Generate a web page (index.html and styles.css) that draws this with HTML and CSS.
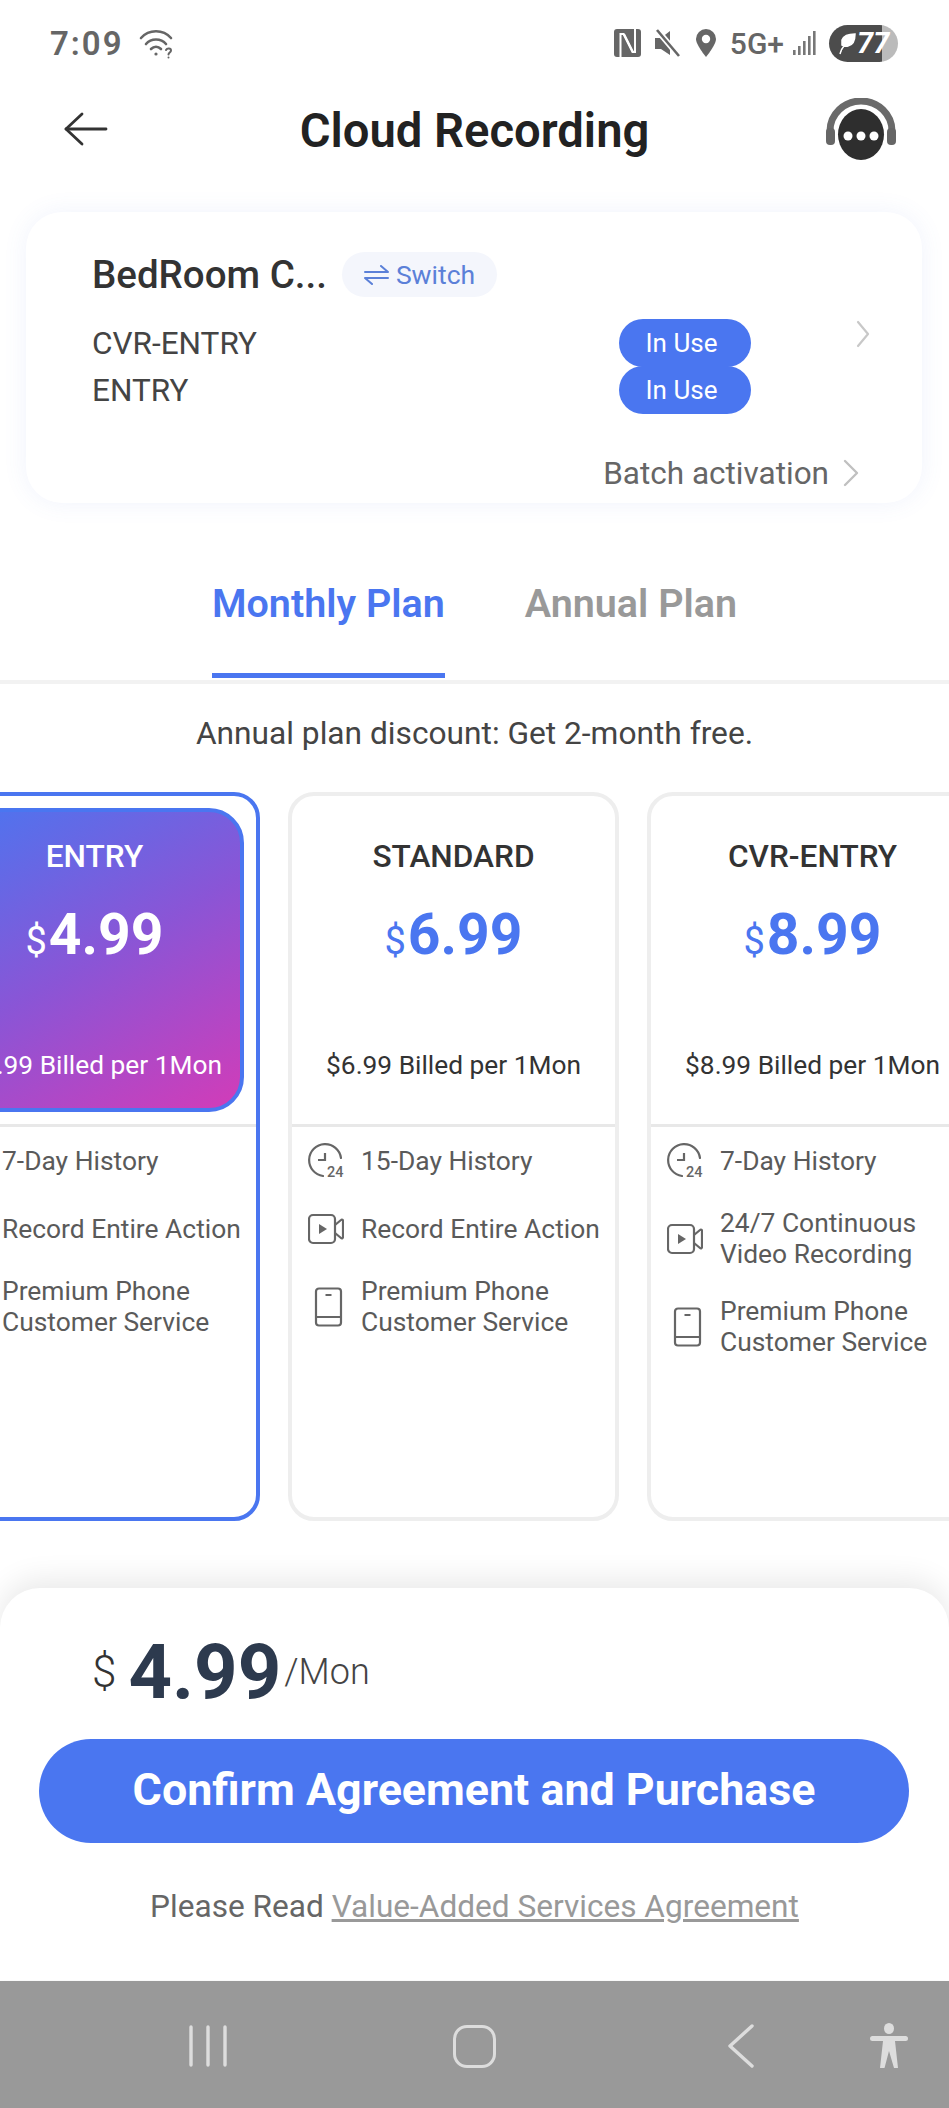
FILE: index.html
```html
<!DOCTYPE html>
<html lang="en">
<head>
<meta charset="utf-8">
<title>Cloud Recording</title>
<link rel="stylesheet" href="styles.css">
</head>
<body>
<div class="page">
  <div class="status">
    <span class="time">7:09</span>
    <svg class="wifi" width="36" height="32" viewBox="0 0 36 32" fill="none" stroke="#666" stroke-width="2.6" stroke-linecap="round"><path d="M2 11C10 2 24 2 32 11"/><path d="M7 17C12 11 22 11 27 17"/><path d="M12 22C15 19 19 19 22 22"/><circle cx="17" cy="27" r="1.6" fill="#666" stroke="none"/><path d="M27 23c1-2 5-2 5 .5 0 2-2.500 2-2.500 4" stroke-width="2"/><circle cx="29.500" cy="30.500" r="1" fill="#666" stroke="none"/></svg>
    <span class="status-gap"></span>
    <svg class="nfc" width="27" height="28" viewBox="0 0 27 28"><rect x="0" y="0" width="27" height="28" rx="3" fill="#666"/><path d="M6.500 28V5h3l9 18h2.500V0" fill="none" stroke="#fff" stroke-width="2"/><path d="M10 5l9 18" fill="none" stroke="#fff" stroke-width="2"/></svg>
    <svg class="mute" width="26" height="28" viewBox="0 0 26 28"><path d="M0 9h6l9-7v24l-9-6H0z" fill="#666"/><path d="M2 1l22 26" stroke="#fff" stroke-width="6"/><path d="M2 1l22 26" stroke="#666" stroke-width="2.600"/></svg>
    <svg class="pin" width="20" height="28" viewBox="0 0 20 28"><path d="M10 0a10 10 0 0 1 10 10c0 6-10 18-10 18S0 16 0 10A10 10 0 0 1 10 0z" fill="#666"/><circle cx="10" cy="10" r="4.200" fill="#fff"/></svg>
    <span class="net">5G+</span>
    <svg class="signal" width="23" height="26" viewBox="0 0 23 26" fill="#777"><rect x="0" y="20" width="2.600" height="5"/><rect x="5" y="16" width="2.600" height="9"/><rect x="10" y="11" width="2.600" height="14"/><rect x="15" y="6" width="2.600" height="19"/><rect x="20" y="1" width="2.600" height="24"/></svg>
    <div class="battery"><svg class="leaf" width="18" height="24" viewBox="0 0 18 24"><path d="M2 23C3 19 4 17 6 15M4 9C6 4 12 3 17 3c0 6-2 11-7 12-2 .5-4 0-6-1z" fill="#fff" stroke="#fff" stroke-width="1.500"/></svg><span class="battery-num">77</span></div>
  </div>

  <div class="header">
    <svg class="back" width="44" height="34" viewBox="0 0 44 34" fill="none" stroke="#333" stroke-width="2.800" stroke-linecap="round" stroke-linejoin="round"><path d="M18 2L2 17l16 15"/><path d="M2 17h40"/></svg>
    <h1 class="title">Cloud Recording</h1>
    <svg class="help" width="70" height="62" viewBox="0 0 70 62"><path d="M4 36V33a31 30 0 0 1 62 0v3" fill="none" stroke="#6a6a6a" stroke-width="7"/><rect x="0" y="30" width="9" height="17" rx="4" fill="#666"/><rect x="61" y="30" width="9" height="17" rx="4" fill="#666"/><ellipse cx="35" cy="36.500" rx="23" ry="25.500" fill="#2e2e2e"/><circle cx="22" cy="38" r="4.500" fill="#fff"/><circle cx="35" cy="38" r="4.500" fill="#fff"/><circle cx="48" cy="38" r="4.500" fill="#fff"/></svg>
  </div>

  <section class="device">
    <div class="device-top">
      <span class="device-name">BedRoom C...</span>
      <span class="switch"><svg width="25" height="20" viewBox="0 0 25 20" fill="none" stroke="#5b80d8" stroke-width="2" stroke-linecap="round" stroke-linejoin="round"><path d="M1 7h23L17 1"/><path d="M24 13H1l7 6"/></svg>Switch</span>
    </div>
    <div class="plans">
      <div class="plan-rows">
        <div class="plan-row"><span>CVR-ENTRY</span><span class="pill">In Use</span></div>
        <div class="plan-row"><span>ENTRY</span><span class="pill">In Use</span></div>
      </div>
      <svg class="chev" width="14" height="28" viewBox="0 0 14 28" fill="none" stroke="#c8c8c8" stroke-width="2.200" stroke-linecap="round" stroke-linejoin="round"><path d="M2 2l10 12L2 26"/></svg>
    </div>
    <div class="batch">Batch activation<svg width="16" height="28" viewBox="0 0 16 28" fill="none" stroke="#c0c0c0" stroke-width="2.400" stroke-linecap="round" stroke-linejoin="round"><path d="M2 2l12 12L2 26"/></svg></div>
  </section>

  <nav class="tabs">
    <div class="tab tab-on">Monthly Plan</div>
    <div class="tab">Annual Plan</div>
  </nav>

  <p class="discount">Annual plan discount: Get 2-month free.</p>

  <svg class="defs" width="0" height="0">
    <defs>
      <symbol id="i-clock" viewBox="0 -2 36 40"><path d="M15 33A16 16 0 1 1 33 15" fill="none" stroke="#666" stroke-width="2.200" stroke-linecap="round"/><path d="M17 10v7h-7" fill="none" stroke="#666" stroke-width="2.200"/><text x="19" y="34" font-family="Roboto" font-size="14.500" font-weight="500" fill="#666">24</text></symbol>
      <symbol id="i-video" viewBox="0 -2 36 40"><rect x="1" y="4" width="26" height="28" rx="4" fill="none" stroke="#666" stroke-width="2.200"/><path d="M11 13l8 5-8 5z" fill="#666"/><path d="M27 14l6-5c1-1 2 0 2 1v16c0 1-1 2-2 1l-6-5" fill="none" stroke="#666" stroke-width="2.200"/></symbol>
      <symbol id="i-phone" viewBox="0 -2 36 40"><rect x="8" y="-0.500" width="25" height="37" rx="3" fill="none" stroke="#666" stroke-width="2.200"/><path d="M8 28h25M17.500 6h6" fill="none" stroke="#666" stroke-width="2.200"/></symbol>
    </defs>
  </svg>

  <div class="cards">
    <article class="card card-on">
      <div class="head head-on">
        <div class="plan-name">ENTRY</div>
        <div class="price"><span class="cur">$</span>4.99</div>
        <div class="billed">$4.99 Billed per 1Mon</div>
      </div>
      <ul class="feats">
        <li class="feat"><svg class="ic"><use href="#i-clock"/></svg><span>7-Day History</span></li>
        <li class="feat"><svg class="ic"><use href="#i-video"/></svg><span>Record Entire Action</span></li>
        <li class="feat"><svg class="ic"><use href="#i-phone"/></svg><span>Premium Phone<br>Customer Service</span></li>
      </ul>
    </article>
    <article class="card">
      <div class="head">
        <div class="plan-name">STANDARD</div>
        <div class="price"><span class="cur">$</span>6.99</div>
        <div class="billed">$6.99 Billed per 1Mon</div>
      </div>
      <ul class="feats">
        <li class="feat"><svg class="ic"><use href="#i-clock"/></svg><span>15-Day History</span></li>
        <li class="feat"><svg class="ic"><use href="#i-video"/></svg><span>Record Entire Action</span></li>
        <li class="feat"><svg class="ic"><use href="#i-phone"/></svg><span>Premium Phone<br>Customer Service</span></li>
      </ul>
    </article>
    <article class="card">
      <div class="head">
        <div class="plan-name">CVR-ENTRY</div>
        <div class="price"><span class="cur">$</span>8.99</div>
        <div class="billed">$8.99 Billed per 1Mon</div>
      </div>
      <ul class="feats">
        <li class="feat"><svg class="ic"><use href="#i-clock"/></svg><span>7-Day History</span></li>
        <li class="feat"><svg class="ic"><use href="#i-video"/></svg><span>24/7 Continuous<br>Video Recording</span></li>
        <li class="feat"><svg class="ic"><use href="#i-phone"/></svg><span>Premium Phone<br>Customer Service</span></li>
      </ul>
    </article>
  </div>

  <section class="sheet">
    <div class="total"><span class="total-cur">$</span><span class="total-num">4.99</span><span class="total-unit">/Mon</span></div>
    <button class="confirm">Confirm Agreement and Purchase</button>
    <p class="agree">Please Read <a class="agree-link">Value-Added Services Agreement</a></p>
  </section>

  <div class="navbar">
    <svg class="nav-ic nav-recent" width="40" height="42" viewBox="0 0 40 42" stroke="#ddd" stroke-width="3.400" stroke-linecap="round"><path d="M3 2v38M20 2v38M37 2v38"/></svg>
    <div class="nav-home"></div>
    <svg class="nav-ic nav-back" width="28" height="44" viewBox="0 0 28 44" fill="none" stroke="#ddd" stroke-width="3.400" stroke-linecap="round" stroke-linejoin="round"><path d="M25 2L3 22l22 20"/></svg>
    <svg class="nav-ic nav-person" width="38" height="46" viewBox="0 0 38 46" fill="#ddd"><ellipse cx="19" cy="5.500" rx="5" ry="5.500"/><rect x="0" y="13" width="38" height="5" rx="2.500"/><path d="M13 18h12l3 27h-4L19 28l-4.500 17H10z"/></svg>
  </div>
</div>
</body>
</html>
```

FILE: styles.css
```css
* { box-sizing: border-box; }
html, body { margin: 0; padding: 0; background: #fff; }
body { font-family: Roboto, "Liberation Sans", sans-serif; color: #333; }
.page { width: 949px; height: 2108px; overflow: hidden; display: flex; flex-direction: column; }

.status { height: 86px; padding: 0 51px 0 50px; display: flex; align-items: center; flex: none; }
.time { font-size: 33px; font-weight: 600; color: #666; letter-spacing: 2px; margin-right: 15px; }
.status-gap { flex: 1; }
.nfc { margin-right: 14px; }
.mute { margin-right: 15px; }
.pin { margin-right: 14px; }
.net { font-size: 30px; font-weight: 500; color: #666; margin-right: 9px; }
.signal { margin-right: 13px; }
.battery { width: 69px; height: 37px; border-radius: 19px; background: linear-gradient(90deg, #4c4c4c 0, #4c4c4c 77%, #bbb 77%); display: flex; align-items: center; padding-left: 9px; gap: 1px; }
.battery-num { font-size: 29px; font-weight: 700; font-style: italic; color: #fff; }

.header { height: 88px; flex: none; display: grid; grid-template-columns: 1fr auto 1fr; align-items: center; padding: 0 53px 0 53px; }
.back { justify-self: start; margin-left: 11px; margin-top: -2px; }
.help { justify-self: end; margin-top: -2px; }
.title { margin: 2px 0 0; font-size: 47.200px; font-weight: 600; color: #222; }

.device { flex: none; height: 291px; margin: 38px 27px 0 26px; border-radius: 36px; background: #fff; box-shadow: 0 0 24px rgba(90,120,220,.09); padding: 40px 63px 0 66px; }
.device-top { display: flex; align-items: center; gap: 15px; height: 45px; }
.device-name { font-size: 38.500px; font-weight: 500; color: #333; }
.switch { height: 45px; border-radius: 23px; background: #f4f6fc; color: #5b80d8; font-size: 26.500px; padding: 0 22px; display: flex; align-items: center; gap: 7px; }
.plans { display: flex; align-items: flex-start; margin-top: 22px; }
.plan-rows { flex: 1; padding-right: 107px; }
.plan-row { display: flex; justify-content: space-between; align-items: center; font-size: 31.500px; color: #444; height: 48px; }
.plan-row + .plan-row { margin-top: -1px; }
.pill { width: 132px; height: 48px; border-radius: 24px; background: #4a76f0; color: #fff; font-size: 26px; display: flex; align-items: center; justify-content: center; padding-right: 7px; }
.chev { margin: 1px -11px 0 -2px; }
.batch { display: flex; justify-content: flex-end; align-items: center; gap: 14px; height: 40px; margin-top: 39px; font-size: 31.500px; color: #666; }

.tabs { flex: none; height: 175px; display: flex; justify-content: center; gap: 80px; align-items: flex-end; }
.tab { height: 105px; padding-top: 1px; font-size: 39.500px; font-weight: 600; color: #999; line-height: 60px; border-bottom: 5px solid transparent; }
.tab-on { color: #4a76f0; border-bottom-color: #4a76f0; }

.discount { flex: none; margin: 2px 0 0; height: 106px; line-height: 100px; border-top: 4px solid #f2f2f2; font-size: 31.700px; color: #444; text-align: center; }
.defs { position: absolute; }

.cards { flex: none; display: flex; gap: 28px; margin: 6px 0 0 -71px; }
.card { flex: none; width: 331px; height: 729px; border: 4px solid #eee; border-radius: 26px; background: #fff; }
.card-on { border-color: #4a76f0; }
.head { height: 304px; margin: 12px; text-align: center; border-radius: 35px; color: #333; display: flex; flex-direction: column; align-items: center; }
.head-on { background: linear-gradient(150deg, #4a76f0 0%, #8a55d6 50%, #d23cb8 100%); color: #fff; border: 4px solid #4a76f0; }
.plan-name { font-size: 31.600px; font-weight: 500; line-height: 40px; margin-top: 29px; white-space: nowrap; }
.head-on .plan-name { margin-top: 25px; }
.price { font-size: 57px; font-weight: 700; line-height: 70px; margin-top: 23px; color: #4a76f0; white-space: nowrap; }
.head-on .price { color: #fff; }
.cur { font-size: 38px; font-weight: 400; margin-right: 2px; }
.billed { font-size: 26.300px; line-height: 34px; margin-top: 72px; white-space: nowrap; color: #333; }
.head-on .billed { color: #fff; }

.feats { list-style: none; margin: 0; padding: 13px 0 0 16px; border-top: 3px solid #e8e8e8; display: flex; flex-direction: column; gap: 26px; }
.feat { display: flex; align-items: center; min-height: 42px; font-size: 26.400px; line-height: 31px; color: #5a5a5a; white-space: nowrap; }
.ic { width: 36px; height: 40px; margin-right: 17px; flex: none; }

.sheet { flex: none; height: 392px; margin-top: 67px; border-radius: 40px 40px 0 0; background: #fff; box-shadow: 0 -8px 30px rgba(0,0,0,.09); padding: 44px 39px 0 39px; }
.total { height: 80px; display: flex; align-items: center; padding-left: 53px; }
.total-cur { font-size: 44px; font-weight: 300; color: #333; margin-right: 12px; }
.total-num { font-size: 76px; font-weight: 700; color: #2d3a4e; line-height: 80px; }
.total-unit { font-size: 36px; font-weight: 300; color: #444; margin-left: 3px; }
.confirm { display: block; width: 870px; height: 104px; margin-top: 27px; padding: 0 0 3px; border: 0; border-radius: 52px; background: #4a76f0; color: #fff; font: 700 44.800px Roboto, sans-serif; }
.agree { margin: 44px 0 0; text-align: center; font-size: 31.600px; line-height: 40px; color: #666; }
.agree-link { color: #999; text-decoration: underline; }

.navbar { flex: none; height: 127px; margin-top: 1px; padding: 3px 0 0 188px; background: #999; display: flex; align-items: center; }
.nav-recent { flex: none; }
.nav-home { flex: none; width: 43px; height: 43px; border: 3.500px solid #ddd; border-radius: 14px; margin-left: 225px; }
.nav-back { flex: none; margin-left: 231px; }
.nav-person { flex: none; margin-left: 115px; }
```
